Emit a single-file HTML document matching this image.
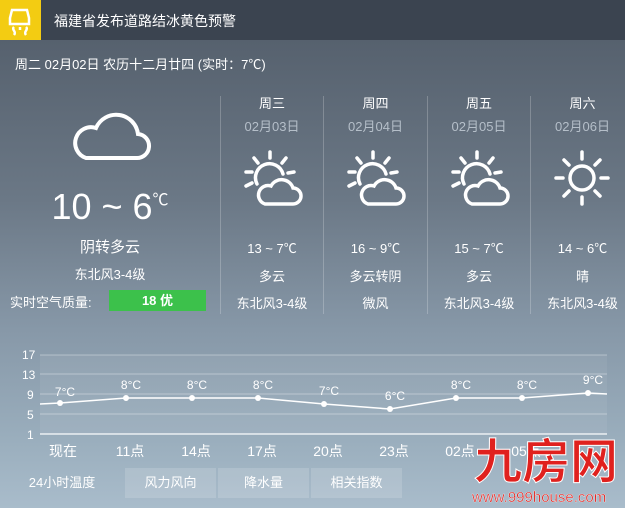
<!DOCTYPE html>
<html style="width:625px;height:508px;overflow:hidden;background:#9aaebd"><head><meta charset="utf-8"><style>
*{margin:0;padding:0;box-sizing:border-box}
body{width:625px;height:508px;overflow:hidden;font-family:"Liberation Sans","Noto Sans CJK SC",sans-serif;color:#fff;position:relative;background:linear-gradient(#56616e 40px,#6b7886 200px,#8798a8 330px,#9aaebd 440px,#a9bccb 508px)}
.top{position:absolute;left:0;top:0;width:625px;height:40px;background:#3b4450}
.warn{position:absolute;left:0;top:0;width:41px;height:40px;background:#f3cc12}
.top .t{position:absolute;left:54px;top:11px;font-size:14px}
.date{position:absolute;left:15px;top:54px;font-size:13px}
.c{position:absolute;text-align:center;font-size:13px;white-space:nowrap}
.div{position:absolute;top:96px;width:1px;height:218px;background:rgba(255,255,255,.22)}
.tab{position:absolute;top:468px;height:30px;line-height:30px;text-align:center;font-size:13px;background:rgba(255,255,255,.15)}
</style></head><body>
<div class="top"><div class="warn">
<svg width="41" height="40" viewBox="0 0 41 40"><path d="M12 10h15l2 8v6h-19v-6z" fill="none" stroke="#fff" stroke-width="2.5"/><path d="M14 27c-3 3 3 4 0 8M26 27c3 3-3 4 0 8M20 27v3" stroke="#fff" stroke-width="2.5" fill="none"/></svg>
</div><div class="t">福建省发布道路结冰黄色预警</div></div>
<div class="date">周二 02月02日 农历十二月廿四 (实时：7℃)</div>

<svg style="position:absolute;left:68px;top:104px" width="84" height="60" viewBox="0 0 84 60"><path d="M18 54h50a12 12 0 0 0 2-24 22 22 0 0 0-42-6 14 14 0 0 0-10 30z" fill="none" stroke="#fff" stroke-width="4"/></svg>
<div class="c" style="left:0;width:220px;top:186px;font-size:36px">10 ~ 6<span style="font-size:16px;vertical-align:top">℃</span></div>
<div class="c" style="left:0;width:220px;top:236px;font-size:15px">阴转多云</div>
<div class="c" style="left:0;width:220px;top:264px">东北风3-4级</div>
<div class="c" style="left:10px;top:292px">实时空气质量:</div>
<div class="c" style="left:109px;top:290px;width:97px;height:21px;line-height:21px;background:#3cc14b;font-weight:bold">18 优</div>

<div class="div" style="left:220px"></div><div class="div" style="left:323px"></div><div class="div" style="left:427px"></div><div class="div" style="left:530px"></div>

<div class="c" style="left:221px;width:102px;top:93px">周三</div>
<div class="c" style="left:221px;width:102px;top:116px;color:#b5bfc9">02月03日</div>
<div class="c" style="left:221px;width:102px;top:238px">13 ~ 7℃</div>
<div class="c" style="left:221px;width:102px;top:266px">多云</div>
<div class="c" style="left:221px;width:102px;top:293px">东北风3-4级</div>

<div class="c" style="left:324px;width:103px;top:93px">周四</div>
<div class="c" style="left:324px;width:103px;top:116px;color:#b5bfc9">02月04日</div>
<div class="c" style="left:324px;width:103px;top:238px">16 ~ 9℃</div>
<div class="c" style="left:324px;width:103px;top:266px">多云转阴</div>
<div class="c" style="left:324px;width:103px;top:293px">微风</div>

<div class="c" style="left:428px;width:102px;top:93px">周五</div>
<div class="c" style="left:428px;width:102px;top:116px;color:#b5bfc9">02月05日</div>
<div class="c" style="left:428px;width:102px;top:238px">15 ~ 7℃</div>
<div class="c" style="left:428px;width:102px;top:266px">多云</div>
<div class="c" style="left:428px;width:102px;top:293px">东北风3-4级</div>

<div class="c" style="left:531px;width:103px;top:93px">周六</div>
<div class="c" style="left:531px;width:103px;top:116px;color:#b5bfc9">02月06日</div>
<div class="c" style="left:531px;width:103px;top:238px">14 ~ 6℃</div>
<div class="c" style="left:531px;width:103px;top:266px">晴</div>
<div class="c" style="left:531px;width:103px;top:293px">东北风3-4级</div>

<svg width="0" height="0" style="position:absolute"><defs>
<g id="pc" fill="none" stroke="#fff" stroke-width="3.5" stroke-linecap="round">
<path d="M27 2v6M11 8l4 5M43 8l-4 5M3 22h6M3 36l6-3M51 22l-6 1"/>
<path d="M14 34a14 14 0 1 1 26-10"/>
<path d="M22 54h28a8 8 0 0 0 0-16 12 12 0 0 0-22-2 9 9 0 0 0-6 18z"/>
</g>
<g id="sun" fill="none" stroke="#fff" stroke-width="3.5" stroke-linecap="round">
<circle cx="28" cy="28" r="12"/>
<path d="M28 2v7M28 47v7M2 28h7M47 28h7M10 10l5 5M46 10l-5 5M10 46l5-5M46 46l-5-5"/>
</g></defs></svg>
<svg style="position:absolute;left:243px;top:150px" width="60" height="60"><use href="#pc"/></svg>
<svg style="position:absolute;left:346px;top:150px" width="60" height="60"><use href="#pc"/></svg>
<svg style="position:absolute;left:450px;top:150px" width="60" height="60"><use href="#pc"/></svg>
<svg style="position:absolute;left:554px;top:150px" width="56" height="56"><use href="#sun"/></svg>

<svg style="position:absolute;left:0;top:340px" width="625" height="120" font-family="Liberation Sans,Noto Sans CJK SC,sans-serif">
<rect x="40" y="15" width="567" height="79" fill="rgba(255,255,255,.06)"/>
<g stroke="rgba(255,255,255,.35)" stroke-width="1"><path d="M40 15H607M40 34H607M40 54H607M40 74H607"/></g>
<path d="M40 94H607" stroke="#fff" stroke-width="1.5" opacity=".8"/>
<g fill="#fff" font-size="12"><text x="22" y="19">17</text><text x="22" y="39">13</text><text x="27" y="59">9</text><text x="27" y="79">5</text><text x="27" y="99">1</text></g>
<polyline points="40,64 60,63 126,58 192,58 258,58 324,64 390,69 456,58 522,58 588,53 607,54" fill="none" stroke="#fff" stroke-width="1.5"/>
<g fill="#fff"><circle cx="60" cy="63" r="3"/><circle cx="126" cy="58" r="3"/><circle cx="192" cy="58" r="3"/><circle cx="258" cy="58" r="3"/><circle cx="324" cy="64" r="3"/><circle cx="390" cy="69" r="3"/><circle cx="456" cy="58" r="3"/><circle cx="522" cy="58" r="3"/><circle cx="588" cy="53" r="3"/></g>
<g fill="#fff" font-size="12" text-anchor="middle"><text x="65" y="56">7°C</text><text x="131" y="49">8°C</text><text x="197" y="49">8°C</text><text x="263" y="49">8°C</text><text x="329" y="55">7°C</text><text x="395" y="60">6°C</text><text x="461" y="49">8°C</text><text x="527" y="49">8°C</text><text x="593" y="44">9°C</text></g>
<g fill="#fff" font-size="14" text-anchor="middle"><text x="63" y="116">现在</text><text x="130" y="116">11点</text><text x="196" y="116">14点</text><text x="262" y="116">17点</text><text x="328" y="116">20点</text><text x="394" y="116">23点</text><text x="460" y="116">02点</text><text x="526" y="116">05点</text></g>
</svg>

<div class="tab" style="left:0;width:124px;background:none">24小时温度</div>
<div class="tab" style="left:125px;width:91px">风力风向</div>
<div class="tab" style="left:218px;width:91px">降水量</div>
<div class="tab" style="left:311px;width:91px">相关指数</div>

<div style="position:absolute;left:474px;top:438px;width:160px;white-space:nowrap;font-size:48px;line-height:50px;color:#e0211e;font-weight:bold;-webkit-text-stroke:1px #fff">九房网</div>
<div style="position:absolute;left:472px;top:489px;white-space:nowrap;font-size:15px;color:#e0211e;-webkit-text-stroke:.3px #fff">www.999house.com</div>
</body></html>
